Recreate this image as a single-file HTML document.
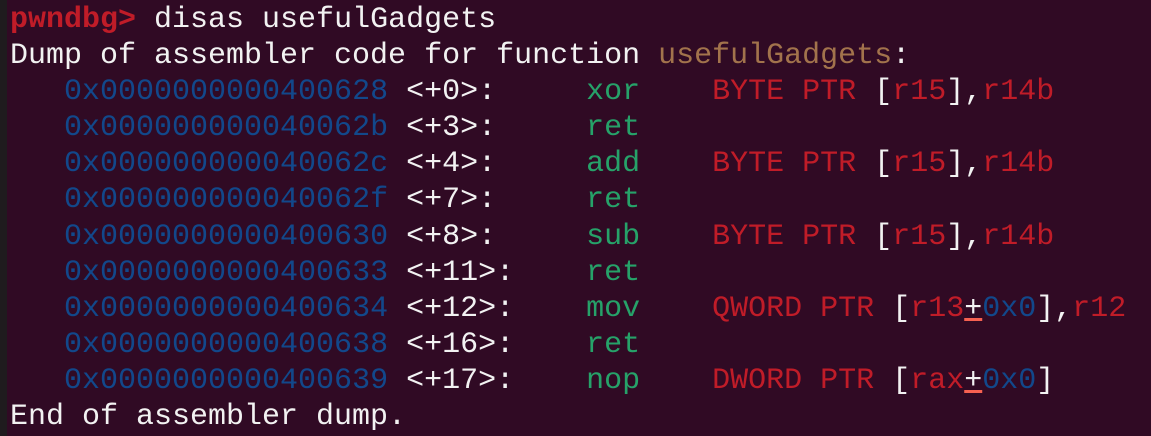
<!DOCTYPE html>
<html><head><style>
html,body{margin:0;padding:0;}
body{width:1151px;height:436px;background:#300a24;overflow:hidden;position:relative;}
.strip{position:absolute;left:0;top:0;width:7px;height:436px;background:#1f1b1e;}
pre{position:absolute;left:10px;top:2px;margin:0;font-family:"Liberation Mono",monospace;font-size:30px;line-height:36.1px;color:#f2f2f2;}
.r{color:#c01c28}.b{color:#12488b}.g{color:#26a269}.y{color:#a2734c}
.p{color:#f2f2f2;text-decoration:underline;text-decoration-color:#f66151;}
.bold{font-weight:bold}
</style></head><body><div class="strip"></div><pre><span class="r bold">pwndbg&gt;</span> disas usefulGadgets
Dump of assembler code for function <span class="y">usefulGadgets</span>:
   <span class="b">0x0000000000400628</span> &lt;+0&gt;:     <span class="g">xor</span>    <span class="r">BYTE PTR </span>[<span class="r">r15</span>],<span class="r">r14b</span>
   <span class="b">0x000000000040062b</span> &lt;+3&gt;:     <span class="g">ret</span>
   <span class="b">0x000000000040062c</span> &lt;+4&gt;:     <span class="g">add</span>    <span class="r">BYTE PTR </span>[<span class="r">r15</span>],<span class="r">r14b</span>
   <span class="b">0x000000000040062f</span> &lt;+7&gt;:     <span class="g">ret</span>
   <span class="b">0x0000000000400630</span> &lt;+8&gt;:     <span class="g">sub</span>    <span class="r">BYTE PTR </span>[<span class="r">r15</span>],<span class="r">r14b</span>
   <span class="b">0x0000000000400633</span> &lt;+11&gt;:    <span class="g">ret</span>
   <span class="b">0x0000000000400634</span> &lt;+12&gt;:    <span class="g">mov</span>    <span class="r">QWORD PTR </span>[<span class="r">r13</span><span class="p">+</span><span class="b">0x0</span>],<span class="r">r12</span>
   <span class="b">0x0000000000400638</span> &lt;+16&gt;:    <span class="g">ret</span>
   <span class="b">0x0000000000400639</span> &lt;+17&gt;:    <span class="g">nop</span>    <span class="r">DWORD PTR </span>[<span class="r">rax</span><span class="p">+</span><span class="b">0x0</span>]
End of assembler dump.</pre></body></html>
